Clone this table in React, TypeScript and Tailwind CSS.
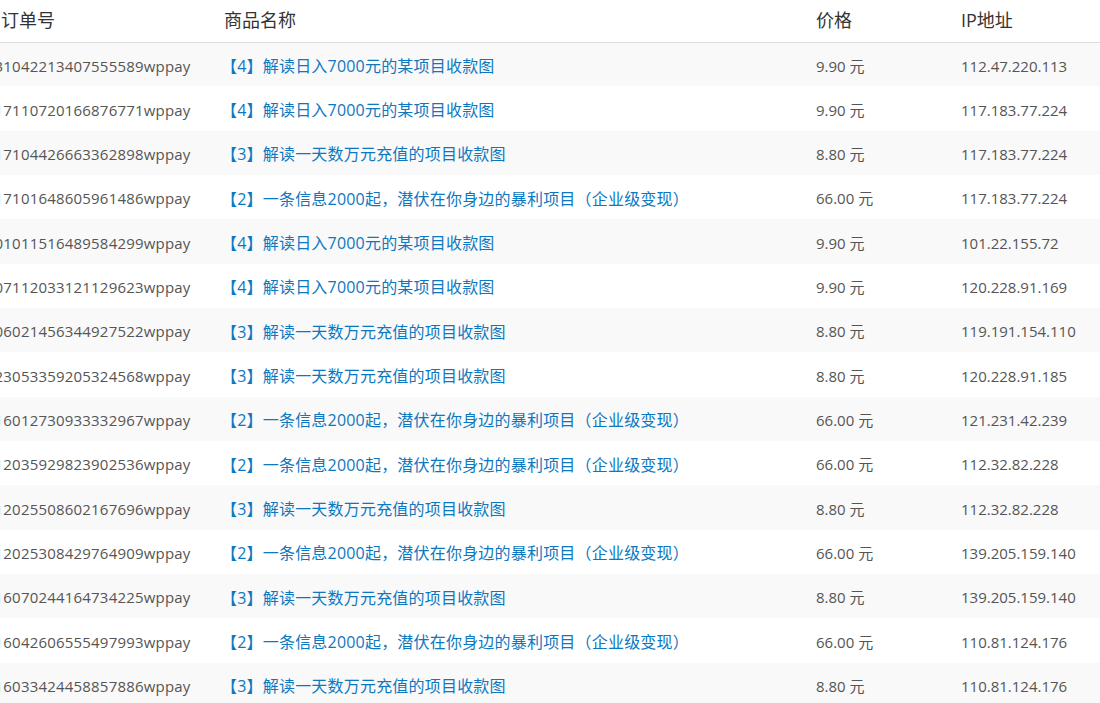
const rows = [
  ["2031042213407555589wppay", "【4】解读日入7000元的某项目收款图", "9.90", "112.47.220.113"],
  ["2017110720166876771wppay", "【4】解读日入7000元的某项目收款图", "9.90", "117.183.77.224"],
  ["2017104426663362898wppay", "【3】解读一天数万元充值的项目收款图", "8.80", "117.183.77.224"],
  ["2017101648605961486wppay", "【2】一条信息2000起，潜伏在你身边的暴利项目（企业级变现）", "66.00", "117.183.77.224"],
  ["2001011516489584299wppay", "【4】解读日入7000元的某项目收款图", "9.90", "101.22.155.72"],
  ["2007112033121129623wppay", "【4】解读日入7000元的某项目收款图", "9.90", "120.228.91.169"],
  ["2006021456344927522wppay", "【3】解读一天数万元充值的项目收款图", "8.80", "119.191.154.110"],
  ["2023053359205324568wppay", "【3】解读一天数万元充值的项目收款图", "8.80", "120.228.91.185"],
  ["2016012730933332967wppay", "【2】一条信息2000起，潜伏在你身边的暴利项目（企业级变现）", "66.00", "121.231.42.239"],
  ["2012035929823902536wppay", "【2】一条信息2000起，潜伏在你身边的暴利项目（企业级变现）", "66.00", "112.32.82.228"],
  ["2012025508602167696wppay", "【3】解读一天数万元充值的项目收款图", "8.80", "112.32.82.228"],
  ["2012025308429764909wppay", "【2】一条信息2000起，潜伏在你身边的暴利项目（企业级变现）", "66.00", "139.205.159.140"],
  ["2016070244164734225wppay", "【3】解读一天数万元充值的项目收款图", "8.80", "139.205.159.140"],
  ["2016042606555497993wppay", "【2】一条信息2000起，潜伏在你身边的暴利项目（企业级变现）", "66.00", "110.81.124.176"],
  ["2016033424458857886wppay", "【3】解读一天数万元充值的项目收款图", "8.80", "110.81.124.176"],
];

export default function App() {
  return (
    <div
      className="w-[1100px] h-[703px] overflow-hidden bg-white"
      style={{ fontFamily: '"Open Sans", "Noto Sans CJK SC", sans-serif' }}
    >
      {/* the order column is scrolled a little to the left in the shot */}
      <table className="table-fixed border-collapse w-[1131px] -ml-[31px]">
        <colgroup>
          <col className="w-[247px]" />
          <col className="w-[592px]" />
          <col className="w-[145px]" />
          <col className="w-[147px]" />
        </colgroup>
        <thead>
          <tr className="h-[42px] border-b border-[#dddddd]">
            <th className="pl-[32px] pr-2 text-left font-normal text-[18px] text-[#333] whitespace-nowrap">订单号</th>
            <th className="px-2 text-left font-normal text-[18px] text-[#333]">商品名称</th>
            <th className="px-2 text-left font-normal text-[18px] text-[#333]">价格</th>
            <th className="px-2 text-left font-normal text-[18px] text-[#333]">IP地址</th>
          </tr>
        </thead>
        <tbody>
          {rows.map((r, i) => (
            <tr key={i} className={i % 2 === 0 ? "h-[44.33px] bg-[#f9f9f9]" : "h-[44.33px] bg-white"}>
              <td className="px-2 pt-[3px] text-[15px] tracking-[0.2px] text-[#555] whitespace-nowrap">{r[0]}</td>
              <td className="pl-[5px] pr-2 pt-[3px] text-[16px] tracking-[0.2px] text-[#0d78c0] whitespace-nowrap">{r[1]}</td>
              <td className="px-2 pt-[3px] text-[15px] text-[#555] whitespace-nowrap">{r[2]} 元</td>
              <td className="px-2 pt-[3px] text-[15px] text-[#555] whitespace-nowrap">{r[3]}</td>
            </tr>
          ))}
        </tbody>
      </table>
    </div>
  );
}
